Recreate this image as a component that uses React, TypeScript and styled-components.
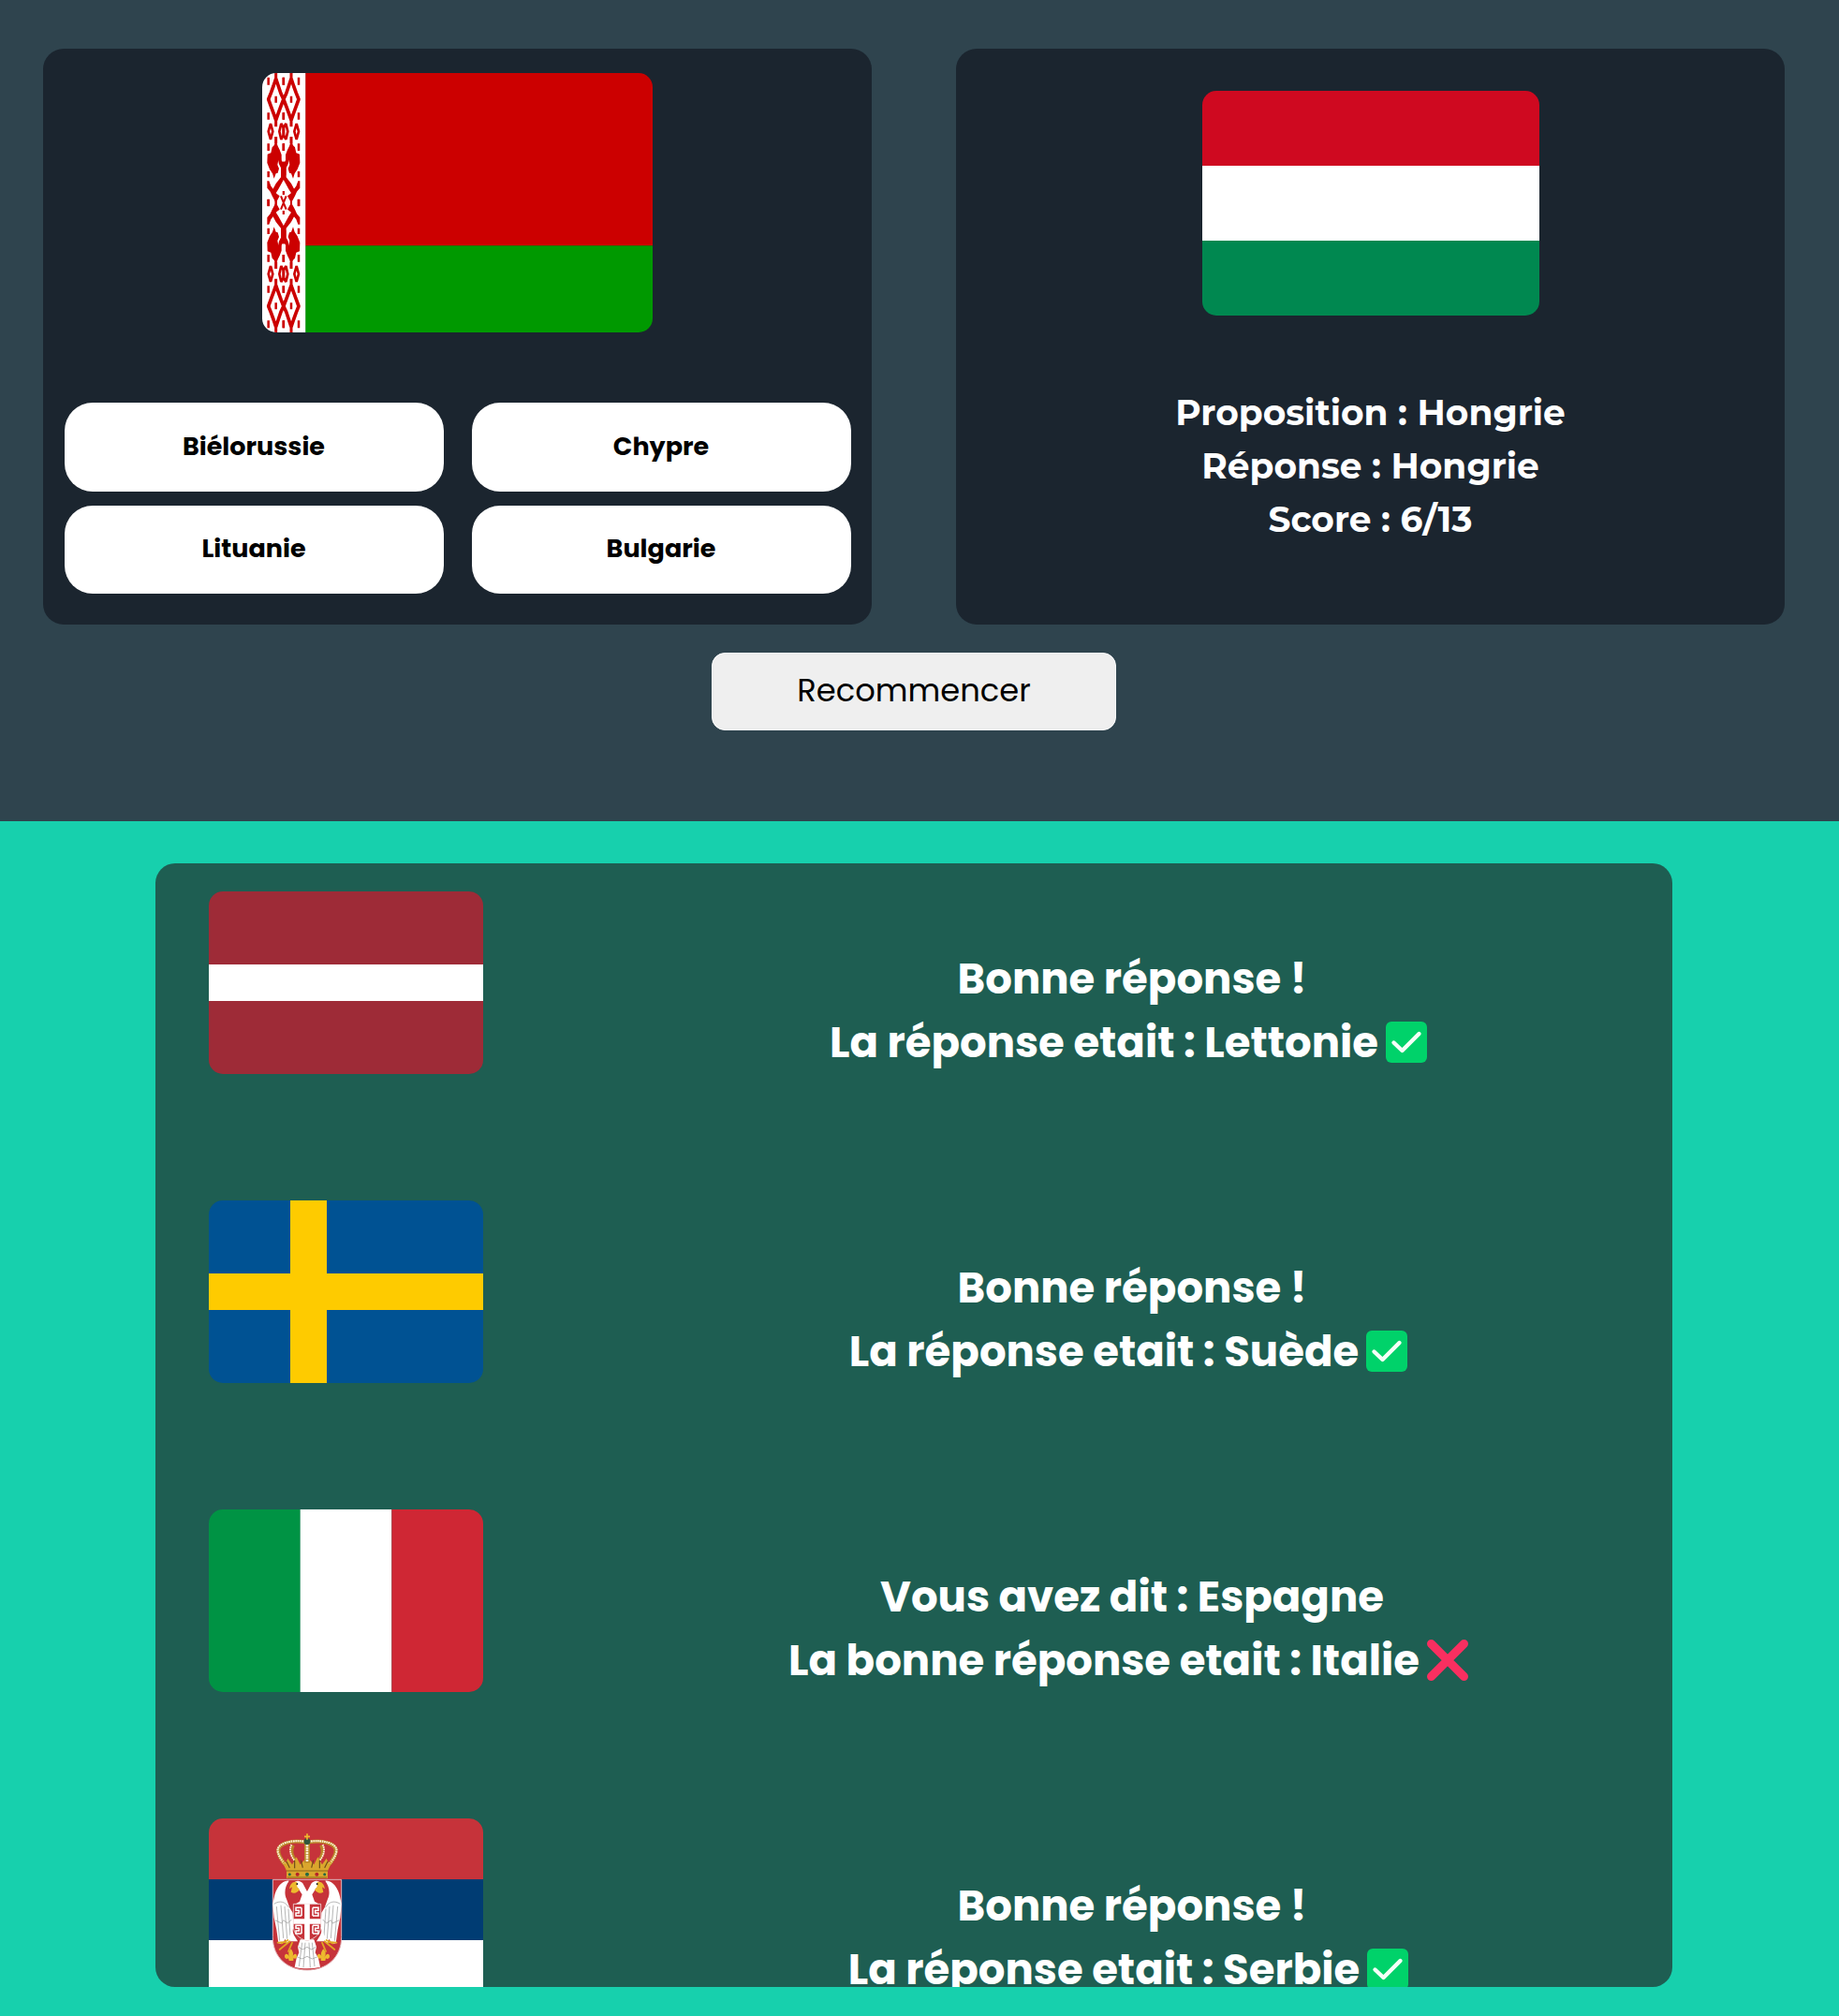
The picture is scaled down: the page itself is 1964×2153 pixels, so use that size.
import React from "react";
import styled, { createGlobalStyle } from "styled-components";

const GlobalStyle = createGlobalStyle`
  *, *::before, *::after { box-sizing: border-box; }
  body {
    margin: 0;
    overflow: hidden;
    background: #17d0ad;
    font-family: Poppins, Inter, "Open Sans", sans-serif;
  }
`;

const Page = styled.main`
  display: flex;
  flex-direction: column;
  height: 2153px;
  overflow: hidden;
`;

const QuizSection = styled.section`
  display: flex;
  flex-direction: column;
  align-items: center;
  gap: 30px;
  height: 877px;
  padding: 52px 58px 0 46px;
  background: #2f444e;
`;

const Cards = styled.div`
  display: grid;
  grid-template-columns: 885px 885px;
  justify-content: space-between;
  width: 100%;
`;

const Card = styled.article<{ $top: number }>`
  display: flex;
  flex-direction: column;
  align-items: center;
  gap: 75px;
  height: 615px;
  padding: ${(p) => p.$top}px 22.5px 0;
  border-radius: 22px;
  background: #1b252f;
`;

const FlagFrame = styled.div<{ $width: number; $height: number }>`
  flex: none;
  width: ${(p) => p.$width}px;
  height: ${(p) => p.$height}px;
  border-radius: 15px;
  overflow: hidden;

  svg {
    display: block;
    width: 100%;
    height: 100%;
  }
`;

const Choices = styled.div`
  display: grid;
  grid-template-columns: 1fr 1fr;
  gap: 15px 30px;
  width: 100%;
`;

const Choice = styled.button`
  height: 94.5px;
  padding: 0 0 1px;
  border: 0;
  border-radius: 30px;
  background: #fff;
  color: #000;
  font: inherit;
  font-size: 27px;
  font-weight: 700;
`;

const Result = styled.div`
  display: flex;
  flex-direction: column;
  align-items: center;
  color: #fff;
  font-family: Montserrat, Inter, sans-serif;
  font-size: 37.5px;
  font-weight: 700;
  line-height: 57px;
`;

const Restart = styled.button`
  width: 432px;
  height: 83px;
  padding: 0 0 2px;
  border: 1px solid #fff;
  border-radius: 14px;
  background: #efefef;
  color: #000;
  font: inherit;
  font-size: 33.75px;
  font-weight: 400;
`;

const HistorySection = styled.section`
  flex: 1;
  padding: 45px 178px 0 166px;
  background: #17d0ad;
`;

const History = styled.ul`
  height: 1200px;
  margin: 0;
  padding: 30px 0 0 57px;
  border-radius: 21px;
  background: #1e5e52;
  list-style: none;
  overflow: hidden;
`;

const HistoryRow = styled.li`
  display: flex;
  align-items: flex-start;
  gap: 116px;
  height: 330px;
`;

const Verdict = styled.div`
  display: flex;
  flex: 1;
  flex-direction: column;
  align-items: center;
  padding-top: 60px;
  color: #fff;
  font-size: 45px;
  font-weight: 700;
  line-height: 68px;
  white-space: nowrap;
`;

const VerdictLine = styled.p`
  display: flex;
  align-items: center;
  height: 68px;
  margin: 0;
`;

const Mark = styled.svg`
  width: 44px;
  height: 44px;
  margin: 0 8px 2px;
`;

const CheckMark = () => (
  <Mark viewBox="0 0 44 44">
    <rect width="44" height="44" rx="6" fill="#00d26a" />
    <path d="M8.5 22.5 17.5 31 35.5 13" fill="none" stroke="#f4fff8" strokeWidth="4.4" strokeLinecap="round" strokeLinejoin="round" />
  </Mark>
);

const CrossMark = () => (
  <Mark viewBox="0 0 44 44">
    <path d="M4.5 4.5 39.5 39.5M39.5 4.5 4.5 39.5" fill="none" stroke="#f92f60" strokeWidth="9" strokeLinecap="round" />
  </Mark>
);

const BelarusFlag = () => (
  <svg viewBox="30 24 1251 831" preserveAspectRatio="none">
    <defs>
      <g id="by-quarter" fill="none" stroke="#cc0000" strokeWidth="9" strokeLinejoin="bevel">
        <path d="M74 18V44M74 172V196M74 228V250" />
        <path d="M98.5 108 90 90 82 66 74 42 66 66 58 88 50 108 58 130 66 152 74 174 82 152 90 130Z" strokeWidth="11" />
        <path d="M74 98V119M50 38V62M98.5 38V62M50 151V173M98.5 151V173M50 250V273M98.5 250V273M50 339V358M50 428V450" strokeWidth="7.5" />
        <path d="M57 186 64 211 57 237 50 211Z" strokeWidth="8" />
        <path d="M91 186 98.5 200V222L91 237 85 211Z" strokeWidth="8" />
        <path d="M74 240 80 258 86 270 92 286 92 302H82L79 318 84 330 80 344 74 346 68 362 63 346 54 332 46 312 47 284 58 280 62 262 68 256Z" fill="#cc0000" stroke="none" />
        <path d="M80 298H90L94 308H106V350L98.5 366 82 396 72 412 60 404 74 378 90 358V328L84 316Z" fill="#cc0000" stroke="none" />
        <path d="M46 370H52L58 386 64 394 76 410 86 418 74 440 62 418 56 404 46 392Z" fill="#cc0000" stroke="none" />
        <path d="M74 424V456M98.5 402V414M90 418 98.5 439" strokeWidth="6" />
      </g>
      <g id="by-half">
        <use href="#by-quarter" />
        <use href="#by-quarter" transform="matrix(-1 0 0 1 197 0)" />
      </g>
    </defs>
    <rect x="30" y="24" width="140" height="831" fill="#fff" />
    <use href="#by-half" />
    <use href="#by-half" transform="matrix(1 0 0 -1 0 879)" />
    <rect x="169" y="24" width="1112" height="554" fill="#cc0000" />
    <rect x="169" y="577" width="1112" height="278" fill="#009900" />
  </svg>
);

const HungaryFlag = () => (
  <svg viewBox="0 0 3 3" preserveAspectRatio="none">
    <rect width="3" height="1" fill="#cf0920" />
    <rect y="1" width="3" height="1" fill="#fff" />
    <rect y="2" width="3" height="1" fill="#008850" />
  </svg>
);

const LatviaFlag = () => (
  <svg viewBox="0 0 5 5" preserveAspectRatio="none">
    <rect width="5" height="5" fill="#9e2b37" />
    <rect y="2" width="5" height="1" fill="#fff" />
  </svg>
);

const SwedenFlag = () => (
  <svg viewBox="0 0 293 195" preserveAspectRatio="none">
    <rect width="293" height="195" fill="#005293" />
    <path d="M87 0H126V78H293V117H126V195H87V117H0V78H87Z" fill="#fecb00" />
  </svg>
);

const ItalyFlag = () => (
  <svg viewBox="0 0 3 2" preserveAspectRatio="none">
    <rect width="1" height="2" fill="#009344" />
    <rect x="1" width="1" height="2" fill="#fff" />
    <rect x="2" width="1" height="2" fill="#cf2734" />
  </svg>
);

const SerbiaFlag = () => (
  <svg viewBox="0 0 293 195" preserveAspectRatio="none">
    <defs>
      <g id="rs-eagle">
        <path d="M74 164C52 160 32 188 27 214L22 238 26 282 34 320 40 364 52 366 62 350 66 366 78 354 84 338 88 310 86 266 76 250 66 222C58 206 60 182 74 164Z" fill="#fff" />
        <path d="M26 238C44 226 62 230 74 250M34 246 44 356M48 242 56 348M60 246 68 350M72 254 78 340M30 290 50 300 56 290 70 300 82 288" fill="none" stroke="#9b9b9b" strokeWidth="2.2" />
        <path d="M132 198 118 172C108 160 92 162 86 176L102 186 116 208 108 230 88 242 132 244Z" fill="#fff" />
        <path d="M100 168C88 164 78 172 75 190L84 184 80 200C92 208 102 200 108 192L100 184Z" fill="#edb92e" />
        <circle cx="100" cy="174" r="3" fill="#222" />
        <path d="M84 322 66 364 78 358 102 358 90 338Z" fill="#fff" />
        <path d="M70 354 50 364M76 358 44 384M84 362 72 390M64 360 38 362" stroke="#e0a623" strokeWidth="5.5" strokeLinecap="round" />
        <path d="M80 382C68 396 74 404 77 410C70 394 60 396 60 406C60 414 68 416 72 412L74 420H88L88 412C96 416 100 410 99 404C98 396 88 396 84 410C88 400 90 396 80 382Z" fill="#edb92e" />
      </g>
      <g id="rs-firesteel">
        <path d="M114 250H96V259H106V267H96V276H114M114 250V276" fill="none" stroke="#fff" strokeWidth="4.5" />
      </g>
      <g id="rs-crown">
        <path d="M66 116C50 100 38 78 40 64C44 46 76 32 126 40" fill="none" stroke="#b98527" strokeWidth="12" />
        <path d="M60 110C48 94 36 78 38 62C44 44 76 32 126 38" fill="none" stroke="#fff4d8" strokeWidth="6.5" strokeDasharray="5 2" />
        <path d="M98 102C84 86 78 66 88 50" fill="none" stroke="#b98527" strokeWidth="10" />
        <path d="M91 98C78 82 74 64 82 48" fill="none" stroke="#fff4d8" strokeWidth="5.5" strokeDasharray="5 2" />
        <path d="M48 92 62 110 70 92 84 112 98 88 110 112 132 88V156H66V132Z" fill="#daa62d" />
        <path d="M66 102 76 122M92 98 92 124M112 98 118 122" stroke="#6b4b1a" strokeWidth="3.5" />
        <path d="M66 132H132M68 153H132" stroke="#7c571b" strokeWidth="2.5" />
        <circle cx="76" cy="143" r="4.5" fill="#246a45" />
        <circle cx="101" cy="143" r="6" fill="#b52329" />
      </g>
    </defs>
    <rect width="293" height="65" fill="#c6333a" />
    <rect y="65" width="293" height="65" fill="#003c73" />
    <rect y="130" width="293" height="65" fill="#fff" />
    <g transform="translate(61 12) scale(.33333)">
      <path d="M22 160H242V344C242 410 194 450 132 450C70 450 22 410 22 344Z" fill="#c6333a" stroke="#e3b4b8" strokeWidth="3" />
      <use href="#rs-eagle" />
      <use href="#rs-eagle" transform="matrix(-1 0 0 1 264 0)" />
      <path d="M110 352H154L162 376 158 394 168 412 174 440C146 446 118 446 92 440L98 412 106 394 102 376Z" fill="#fff" />
      <path d="M116 362 106 438M126 362 120 442M138 362 142 442M148 362 156 438M104 376 118 384 132 376 146 384 160 376M100 408 116 414 132 406 148 414 164 408" fill="none" stroke="#9b9b9b" strokeWidth="2.2" />
      <path d="M88 238H176V310C176 334 156 350 132 356C108 350 88 334 88 310Z" fill="#c6333a" stroke="#efe0e0" strokeWidth="2.5" />
      <path d="M132 238V355M88 294H176" stroke="#fff" strokeWidth="17" />
      <use href="#rs-firesteel" />
      <use href="#rs-firesteel" y="57" />
      <use href="#rs-firesteel" transform="matrix(-1 0 0 1 264 0)" />
      <use href="#rs-firesteel" transform="matrix(-1 0 0 1 264 57)" />
      <use href="#rs-crown" />
      <use href="#rs-crown" transform="matrix(-1 0 0 1 264 0)" />
      <path d="M132 34V106" stroke="#b98527" strokeWidth="18" />
      <path d="M132 48V104" stroke="#fff4d8" strokeWidth="8" strokeDasharray="6 2" />
      <circle cx="132" cy="38" r="10" fill="#31583d" />
      <circle cx="132" cy="143" r="6" fill="#246a45" />
      <path d="M132 13V32M123 22H141" stroke="#edb92e" strokeWidth="5" />
    </g>
  </svg>
);

const choices = ["Biélorussie", "Chypre", "Lituanie", "Bulgarie"];

const results = ["Proposition : Hongrie", "Réponse : Hongrie", "Score : 6/13"];

const history: { id: string; Flag: React.FC; correct: boolean; lines: [string, string] }[] = [
  { id: "lv", Flag: LatviaFlag, correct: true, lines: ["Bonne réponse !", "La réponse etait : Lettonie"] },
  { id: "se", Flag: SwedenFlag, correct: true, lines: ["Bonne réponse !", "La réponse etait : Suède"] },
  { id: "it", Flag: ItalyFlag, correct: false, lines: ["Vous avez dit : Espagne", "La bonne réponse etait : Italie"] },
  { id: "rs", Flag: SerbiaFlag, correct: true, lines: ["Bonne réponse !", "La réponse etait : Serbie"] },
];

export default function App() {
  return (
    <Page>
      <GlobalStyle />
      <QuizSection>
        <Cards>
          <Card $top={26}>
            <FlagFrame $width={417} $height={277}>
              <BelarusFlag />
            </FlagFrame>
            <Choices>
              {choices.map((label) => (
                <Choice key={label}>{label}</Choice>
              ))}
            </Choices>
          </Card>
          <Card $top={45}>
            <FlagFrame $width={360} $height={240}>
              <HungaryFlag />
            </FlagFrame>
            <Result>
              {results.map((text) => (
                <span key={text}>{text}</span>
              ))}
            </Result>
          </Card>
        </Cards>
        <Restart>Recommencer</Restart>
      </QuizSection>
      <HistorySection>
        <History>
          {history.map(({ id, Flag, correct, lines }) => (
            <HistoryRow key={id}>
              <FlagFrame $width={293} $height={195}>
                <Flag />
              </FlagFrame>
              <Verdict>
                <VerdictLine>{lines[0]}</VerdictLine>
                <VerdictLine>
                  {lines[1]}
                  {correct ? <CheckMark /> : <CrossMark />}
                </VerdictLine>
              </Verdict>
            </HistoryRow>
          ))}
        </History>
      </HistorySection>
    </Page>
  );
}
